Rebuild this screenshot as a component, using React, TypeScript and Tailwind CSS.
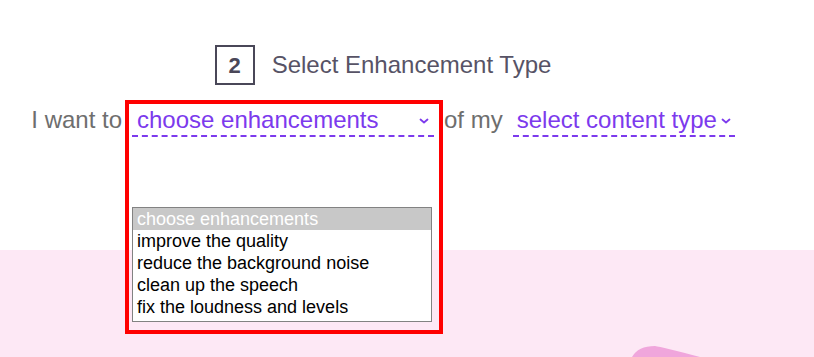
import React from "react";

function Chevron() {
  return (
    <svg width="10" height="6" viewBox="0 0 10 6" className="shrink-0 mt-[2px]">
      <polyline points="1.5,1.5 5,4.5 8.5,1.5" fill="none" stroke="#7c3aed" strokeWidth="1.8" strokeLinecap="round" strokeLinejoin="round" />
    </svg>
  );
}

const options = [
  "choose enhancements",
  "improve the quality",
  "reduce the background noise",
  "clean up the speech",
  "fix the loudness and levels",
];

export default function App() {
  return (
    <div className="relative h-[357px] overflow-hidden bg-white font-['Liberation_Sans',Arial,sans-serif]">
      <div className="h-[250px] pt-[45px]">
        {/* Step header */}
        <div className="w-[766px] flex justify-center items-center gap-[17px]">
          <div className="w-10 h-10 border-2 border-[#4a4758] flex items-center justify-center text-[22px] font-bold text-[#4a4758]">
            2
          </div>
          <span className="text-[24px] text-[#575366]">Select Enhancement Type</span>
        </div>

        {/* Sentence */}
        <div className="mt-[20px] w-[766px] flex justify-center items-end text-[24px] leading-[30px]">
          <span className="text-[#6e6e6e] pb-[2px]">I want to</span>
          <div className="ml-[10px] w-[302px] h-[32px] border-b-2 border-dashed border-[#7c3aed] flex justify-between items-center pl-[5px] pr-[5px] text-[#7c3aed]">
            <span>choose enhancements</span>
            <Chevron />
          </div>
          <span className="ml-[10px] text-[#6e6e6e] pb-[2px]">of my</span>
          <div className="ml-[10px] w-[222px] h-[32px] border-b-2 border-dashed border-[#7c3aed] flex items-center gap-[4px] pl-[4px] text-[#7c3aed]">
            <span>select content type</span>
            <Chevron />
          </div>
        </div>
      </div>

      <div className="h-[107px] bg-[#fde8f5]" />

      {/* blob */}
      <svg className="absolute left-0 top-0 pointer-events-none" width="814" height="357" viewBox="0 0 814 357">
        <path d="M632 357 Q638 346 655 346 Q662 347 700 357 Z" fill="#f0a6dc" />
      </svg>

      {/* open dropdown list */}
      <div className="absolute left-[132px] top-[207px] w-[300px] border border-[#828282] bg-white text-[18px] leading-[22px] text-black pb-[3px]">
        {options.map((o, i) => (
          <div key={o} className={i === 0 ? "bg-[#c8c8c8] text-white pl-[4px]" : "pl-[4px]"}>
            {o}
          </div>
        ))}
      </div>

      {/* highlight frame */}
      <div className="absolute left-[125px] top-[100px] w-[318px] h-[234px] border-4 border-[#ff0000] pointer-events-none" />
    </div>
  );
}
